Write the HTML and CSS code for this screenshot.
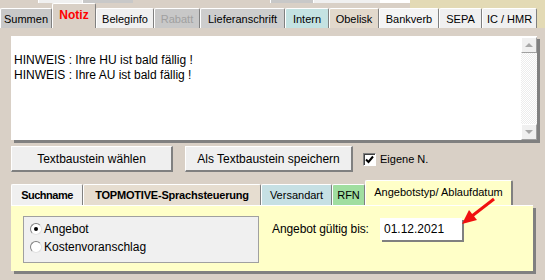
FILE: index.html
```html
<!DOCTYPE html>
<html lang="de">
<head>
<meta charset="UTF-8">
<title>Notiz</title>
<link rel="stylesheet" href="styles.css">
</head>
<body>
<div class="window">
    <div class="tabstrip">
        <div class="upper-row">
            <span class="seg seg-a"></span>
            <span class="seg seg-b"></span>
            <span class="seg seg-c"></span>
            <span class="seg seg-d"></span>
            <span class="seg seg-e"></span>
            <span class="seg seg-f"></span>
            <span class="seg seg-g"></span>
        </div>
        <div class="tabs top-tabs">
            <div class="tab t-summen">Summen</div>
            <div class="tab t-notiz active">Notiz</div>
            <div class="tab t-beleg">Beleginfo</div>
            <div class="tab t-rabatt">Rabatt</div>
            <div class="tab t-liefer">Lieferanschrift</div>
            <div class="tab t-intern">Intern</div>
            <div class="tab t-obelisk">Obelisk</div>
            <div class="tab t-bank">Bankverb</div>
            <div class="tab t-sepa">SEPA</div>
            <div class="tab t-ic">IC / HMR</div>
        </div>
    </div>

    <div class="notiz-panel">
        <div class="memo">
            <div class="memo-text">
                HINWEIS : Ihre HU ist bald fällig !<br>
                HINWEIS : Ihre AU ist bald fällig !
            </div>
            <div class="scrollbar">
                <div class="sb-btn"><span class="arrow-up"></span></div>
                <div class="sb-track"></div>
                <div class="sb-btn"><span class="arrow-down"></span></div>
            </div>
        </div>

        <div class="button-row">
            <button class="btn btn-wide">Textbaustein wählen</button>
            <button class="btn btn-save">Als Textbaustein speichern</button>
            <label class="check">
                <span class="checkbox">
                    <svg width="9" height="9" viewBox="0 0 9 9"><path d="M1 4.5 L3.5 7 L8 1.5" fill="none" stroke="#000" stroke-width="2"/></svg>
                </span>
                Eigene N.
            </label>
        </div>

        <div class="tabs sub-tabs">
            <div class="tab s-such bold">Suchname</div>
            <div class="tab s-top bold">TOPMOTIVE-Sprachsteuerung</div>
            <div class="tab s-versand">Versandart</div>
            <div class="tab s-rfn">RFN</div>
            <div class="tab s-angebot active">Angebotstyp/ Ablaufdatum</div>
        </div>

        <div class="sub-panel">
            <div class="group">
                <div class="radio-row"><span class="radio checked"></span>Angebot</div>
                <div class="radio-row"><span class="radio"></span>Kostenvoranschlag</div>
            </div>
            <div class="date-row">
                <span class="date-label">Angebot gültig bis:</span>
                <div class="date-input">01.12.2021</div>
            </div>
        </div>
    </div>

    <svg class="pointer" width="545" height="280" viewBox="0 0 545 280">
        <line x1="494" y1="199" x2="472" y2="216" stroke="#f01010" stroke-width="3"/>
        <polygon points="462,224 469,210 477,220" fill="#f01010"/>
    </svg>
</div>
</body>
</html>
```

FILE: styles.css
```css
body {
    margin: 0;
    background-color: #d9d0c6;
    font-family: "Liberation Sans", Arial, sans-serif;
    color: #000;
}
.window {
    position: relative;
    width: 545px;
    height: 280px;
    overflow: hidden;
}
.tabstrip {
    height: 28px;
    background: linear-gradient(to right, #d9d0c6 410px, #e3dab5 410px);
}
.upper-row {
    display: flex;
    height: 3px;
}
.seg {
    height: 3px;
}
.seg-a { width: 38px; background-color: #d9d0c6; }
.seg-b { width: 44px; background-color: #f0f0f0; border-left: 1px solid #fff; box-sizing: border-box; }
.seg-c { width: 51px; background-color: #c8c8c8; border-left: 1px solid #fff; box-sizing: border-box; }
.seg-d { width: 137px; background-color: #d9d0c6; }
.seg-e { width: 43px; background-color: #c8c8c8; border-left: 1px solid #fff; box-sizing: border-box; }
.seg-f { width: 67px; background-color: #f0f0f0; border-left: 1px solid #fff; box-sizing: border-box; }
.seg-g { width: 30px; background-color: #fff; }

.tabs {
    display: flex;
    align-items: flex-end;
}
.top-tabs {
    height: 25px;
}
.tab {
    box-sizing: border-box;
    height: 20px;
    display: flex;
    align-items: center;
    justify-content: center;
    font-size: 11px;
    white-space: nowrap;
    border-top: 1px solid #fff;
    border-left: 1px solid #fff;
    border-right: 1px solid #808080;
    border-radius: 2px 2px 0 0;
    background-color: #c8c8c8;
}
.tab.active {
    height: 25px;
    padding-bottom: 3px;
}
.t-summen { width: 52px; }
.t-notiz { width: 44px; background-color: #d9d0c6; color: #ff0000; font-weight: bold; font-size: 12px; }
.t-beleg { width: 58px; background-color: #f0f0f0; }
.t-rabatt { width: 46px; color: #a0a0a0; }
.t-liefer { width: 85px; background-color: #cdcdcd; }
.t-intern { width: 44px; background-color: #c4e2e2; }
.t-obelisk { width: 50px; background-color: #e2d9cc; }
.t-bank { width: 60px; background-color: #f4f4f4; }
.t-sepa { width: 43px; background-color: #f0f0f0; }
.t-ic { width: 55px; background-color: #f0f0f0; }

.notiz-panel {
    padding: 8px 0 0 11px;
}
.memo {
    display: flex;
    width: 526px;
    height: 104px;
    background-color: #fff;
    box-shadow: 3px 3px 0 #808080;
}
.memo-text {
    flex: 1;
    padding: 17px 0 0 3px;
    font-size: 12px;
    line-height: 15px;
}
.scrollbar {
    display: flex;
    flex-direction: column;
    width: 16px;
    padding-top: 1px;
}
.sb-btn {
    box-sizing: border-box;
    height: 16px;
    display: flex;
    align-items: center;
    justify-content: center;
    background-color: #f0f0f0;
    border-top: 1px solid #fff;
    border-left: 1px solid #fff;
    border-right: 1px solid #a0a0a0;
    border-bottom: 1px solid #a0a0a0;
}
.sb-track {
    flex: 1;
    background: repeating-conic-gradient(#ececec 0 25%, #fff 0 50%) 0 0 / 2px 2px;
}
.arrow-up {
    width: 0;
    height: 0;
    border-left: 4px solid transparent;
    border-right: 4px solid transparent;
    border-bottom: 4px solid #a8a8a8;
}
.arrow-down {
    width: 0;
    height: 0;
    border-left: 4px solid transparent;
    border-right: 4px solid transparent;
    border-top: 4px solid #a8a8a8;
}

.button-row {
    display: flex;
    align-items: center;
    margin-top: 6px;
}
.btn {
    box-sizing: border-box;
    height: 26px;
    padding: 0;
    font-family: "Liberation Sans", Arial, sans-serif;
    font-size: 12px;
    color: #000;
    background-color: #efefef;
    border-top: 1px solid #fff;
    border-left: 1px solid #fff;
    border-right: 2px solid #808080;
    border-bottom: 2px solid #808080;
}
.btn-wide {
    width: 162px;
}
.btn-save {
    width: 168px;
    margin-left: 12px;
}
.check {
    display: flex;
    align-items: center;
    gap: 4px;
    margin-left: 10px;
    font-size: 11px;
}
.checkbox {
    box-sizing: border-box;
    width: 13px;
    height: 13px;
    display: flex;
    align-items: center;
    justify-content: center;
    background-color: #fff;
    border: 1px solid;
    border-color: #808080 #fff #fff #808080;
    box-shadow: inset 1px 1px 0 #404040;
}

.sub-tabs {
    height: 25px;
    margin-top: 8px;
}
.sub-tabs .tab {
    height: 21px;
}
.sub-tabs .tab.active {
    height: 25px;
    padding-bottom: 2px;
    border-right: 2px solid #808080;
}
.bold {
    font-weight: bold;
}
.s-such { width: 72px; background-color: #f0f0f0; letter-spacing: -0.5px; }
.s-top { width: 178px; background-color: #e6ddd0; letter-spacing: -0.2px; }
.s-versand { width: 71px; background-color: #c6e0e4; }
.s-rfn { width: 33px; background-color: #a0dea0; }
.s-angebot { width: 148px; background-color: #ffffc8; }

.sub-panel {
    box-sizing: border-box;
    display: flex;
    align-items: flex-start;
    gap: 13px;
    width: 522px;
    height: 66px;
    padding: 10px 0 0 12px;
    background-color: #ffffc8;
    border-top: 1px solid #fff;
    box-shadow: 3px 3px 0 #808080;
}
.group {
    box-sizing: border-box;
    width: 236px;
    height: 47px;
    padding: 3px 0 0 6px;
    background-color: #f0f0f0;
    border: 1px solid #a0a0a0;
    font-size: 12px;
}
.radio-row {
    display: flex;
    align-items: center;
    gap: 2px;
    height: 18px;
}
.radio {
    box-sizing: border-box;
    position: relative;
    width: 12px;
    height: 12px;
    border-radius: 50%;
    background-color: #fff;
    border: 1px solid;
    border-color: #808080 #e0e0e0 #e0e0e0 #808080;
}
.radio.checked::after {
    content: "";
    position: absolute;
    left: 3px;
    top: 3px;
    width: 4px;
    height: 4px;
    border-radius: 50%;
    background-color: #000;
}
.date-row {
    display: flex;
    align-items: center;
    gap: 9px;
    margin-top: 2px;
}
.date-label {
    width: 99px;
    font-size: 12px;
    letter-spacing: -0.1px;
    white-space: nowrap;
}
.date-input {
    box-sizing: border-box;
    width: 82px;
    height: 22px;
    padding-left: 4px;
    display: flex;
    align-items: center;
    font-size: 12px;
    background-color: #fff;
    box-shadow: 2px 2px 0 #808080;
}
.pointer {
    position: absolute;
    left: 0;
    top: 0;
    pointer-events: none;
}
```
